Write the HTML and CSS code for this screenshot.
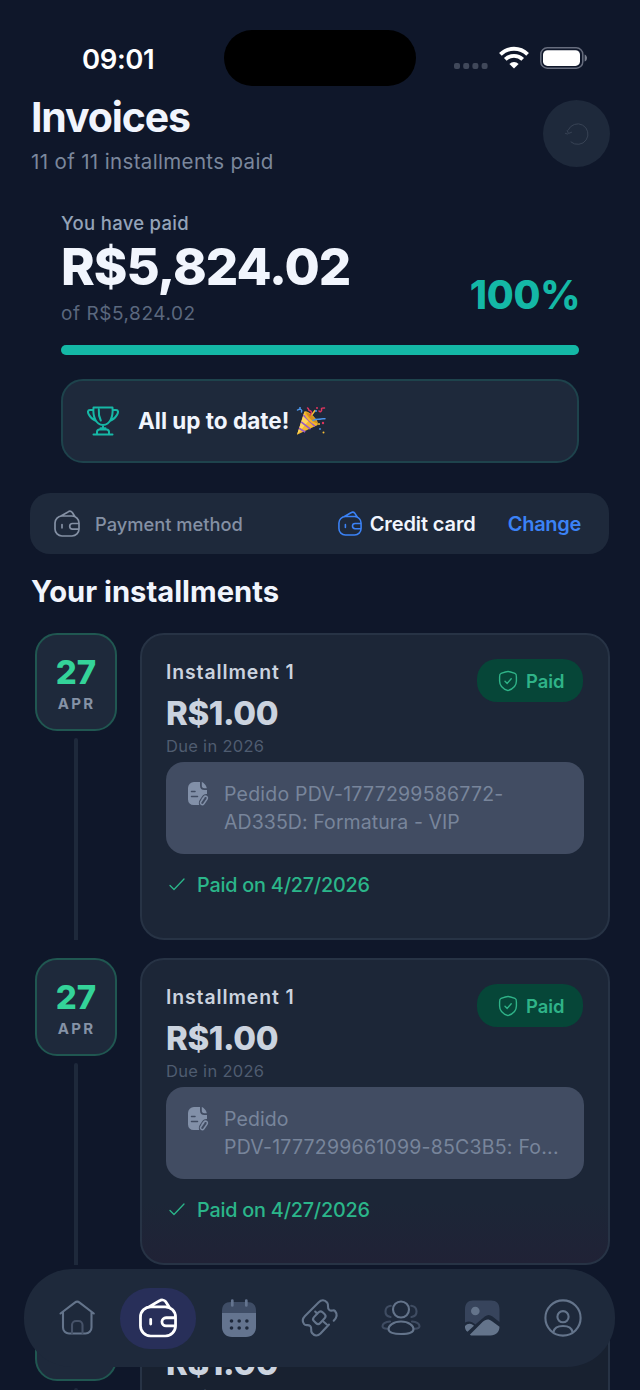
FILE: index.html
```
<!DOCTYPE html>
<html lang="en">
<head>
<meta charset="utf-8">
<title>Invoices</title>
<link rel="stylesheet" href="styles.css">
</head>
<body>
<svg class="defs" width="0" height="0" aria-hidden="true">
  <symbol id="wallet" viewBox="0 0 26 27" fill="none" stroke="currentColor" stroke-linecap="round" stroke-linejoin="round">
    <path d="M8 6h10a7 7 0 0 1 7 7v6a7 7 0 0 1-7 7H8a7 7 0 0 1-7-7v-6a7 7 0 0 1 7-7ZM6.500 6.200 14 1.900a3.300 3.300 0 0 1 4.300.6L21 6.700M25 13.500h-6.500a2.800 2.800 0 0 0 0 5.600H25M8 14.600v3.200"/>
  </symbol>
  <symbol id="shield" viewBox="0 0 20 22" fill="none" stroke="currentColor" stroke-linecap="round" stroke-linejoin="round">
    <path d="M10 1.500c-2.500 0-5 1.200-7.300 2.100C1.600 4 1.600 5 1.600 7v4c0 5.600 4.400 8.300 8.400 9.600 4-1.300 8.400-4 8.400-9.600V7c0-2 0-3-1.100-3.400C15 2.700 12.500 1.500 10 1.500ZM7 11.200l2.200 2.200 4-4.600"/>
  </symbol>
  <symbol id="note" viewBox="0 0 22 25">
    <path fill="currentColor" d="M7 1h6v3.500c0 3 1.500 4.500 4.500 4.500H20v4c-1.500-.3-3.500.4-4.800 2.200l-2.600 4.100c-.9 1.500-.9 3.300-.4 4.700H6.500A5.500 5.500 0 0 1 1 18.500V7a6 6 0 0 1 6-6Zm7.800.1c1.800.5 4.500 3.400 5 6.100h-2.300c-2 0-2.700-.8-2.700-2.700V1.100Z"/>
    <path d="M4.500 10.500H8M4.500 15.500h6" stroke="#414c62" stroke-width="1.500" stroke-linecap="round"/>
    <path d="M15 18.500l1.700-2.300c1.900-2.300 4.700-.4 3.200 2.200l-3 4.300c-1.500 2-4.300.4-3-2l2.800-3.900" fill="none" stroke="currentColor" stroke-width="1.500" stroke-linecap="round"/>
  </symbol>
  <symbol id="check" viewBox="0 0 16 13" fill="none" stroke="currentColor" stroke-width="1.300" stroke-linecap="round" stroke-linejoin="round">
    <path d="M1 7.500l4 4L15 1"/>
  </symbol>
</svg>

<main class="screen">
  <div class="status">
    <span class="clock">09:01</span>
    <span class="island"></span>
    <span class="signals">
      <svg class="dots" width="34" height="6" viewBox="0 0 34 6"><g fill="#40485a"><rect width="6" height="6" rx="2"/><rect x="9.200" width="6" height="6" rx="2"/><rect x="18.400" width="6" height="6" rx="2"/><rect x="27.600" width="6" height="6" rx="2"/></g></svg>
      <svg class="wifi" width="30" height="22" viewBox="0 0 30 22"><g fill="none" stroke="#fff" stroke-width="3.800"><path d="M1.400 7.300a19.400 19.400 0 0 1 27.200 0"/><path d="M6.300 12.400a12.500 12.500 0 0 1 17.400 0"/></g><path fill="#fff" d="M10.400 16.900a6.600 6.600 0 0 1 9.200 0L15 21.600Z"/></svg>
      <svg class="battery" width="48" height="22" viewBox="0 0 48 22"><rect x=".8" y=".8" width="42" height="20.400" rx="6.500" fill="none" stroke="#676d7e" stroke-width="1.500"/><rect x="3" y="3.300" width="37" height="15.600" rx="4.500" fill="#fff"/><path fill="#777d8c" d="M44.600 7.500c3.200 1 3.200 6 0 7Z"/></svg>
    </span>
  </div>

  <header class="top">
    <div>
      <h1 class="title">Invoices</h1>
      <p class="subtitle">11 of 11 installments paid</p>
    </div>
    <button class="refresh" aria-label="Refresh">
      <svg width="26" height="26" viewBox="0 0 26 26" fill="none" stroke="#384355" stroke-linecap="round"><path d="M4.200 9A10.300 10.300 0 1 1 7 21M1.500 12.400l2 .6M3.200 9.500l1.300 3 3-1.200"/></svg>
    </button>
  </header>

  <section class="summary">
    <div class="totals">
      <div>
        <p class="label">You have paid</p>
        <p class="amount">R$5,824.02</p>
        <p class="of">of R$5,824.02</p>
      </div>
      <p class="percent">100%</p>
    </div>
    <div class="progress"><div class="progress-fill"></div></div>
    <div class="alert">
      <svg width="32" height="30" viewBox="0 0 32 30" fill="none" stroke="#16b8a6" stroke-width="2" stroke-linecap="round" stroke-linejoin="round"><path d="M6.500 1.500h19c.8 8.500-2 17.500-9.500 17.500S5.700 10 6.500 1.500ZM6.500 4H3C.5 4 .5 6 1.800 8.500c1.500 3 4.500 5.200 7 6.200M25.500 4H29c2.500 0 2.500 2 1.200 4.500-1.500 3-4.500 5.200-7 6.200M11.800 3.500c-.3 4 .5 8 2 11M16 19v4M13.500 22.300h5M10 28v-2c0-1.500.8-2.500 2.500-2.500h7c1.700 0 2.500 1 2.500 2.500v2M6.500 28.500h19"/></svg>
      <span class="alert-text">All up to date!</span>
      <svg class="party" width="30" height="30" viewBox="0 0 30 30">
        <path fill="#f5b82e" d="M1 28.700 8.400 5.700c3.900 1.500 11.300 8.400 13.300 13.200Z"/>
        <path fill="#ffd75a" d="M1 28.700 8.400 5.700c2 2 3.600 5.800 3.600 9.800Z"/>
        <path fill="none" stroke="#985bc4" stroke-width="1.600" d="M7.300 9.200 19 20.400M5.100 15.800l9.400 7.400M3 22.200l6.200 3.800"/>
        <ellipse cx="15" cy="12.200" rx="9.300" ry="3.200" transform="rotate(45 15 12.200)" fill="#f2b52c"/>
        <ellipse cx="15.600" cy="11.700" rx="7.500" ry="1.800" transform="rotate(45 15.600 11.700)" fill="#d48f1e"/>
        <g fill="none" stroke-width="1.500" stroke-linecap="round"><path stroke="#e0355f" d="M14 9c3-3 1-4-.5-4.500s-.3-2-2-2.500M23 5c2 2 3-1 2.500-2s1.500-1 3-1"/><path stroke="#4b94e8" d="M17 14.500c3-2 6-1 8-1.500s2.500 0 4-.3M1.500 4c3-2 5 0 4 2"/><path stroke="#f7bd35" d="M16 8.500l3-4"/></g>
        <g><circle cx="4" cy="2" r="1" fill="#4b94e8"/><circle cx="20" cy="5" r="1" fill="#4b94e8"/><circle cx="27" cy="17" r="1.200" fill="#e0355f"/><circle cx="23" cy="18" r="1" fill="#f7bd35"/><circle cx="27.500" cy="26.500" r="1" fill="#f7bd35"/><circle cx="24" cy="23" r=".9" fill="#4b94e8"/><circle cx="21" cy="2" r="1" fill="#e0355f"/></g>
      </svg>
    </div>
  </section>

  <section class="payment">
    <svg class="pay-icon" width="26" height="27"><use href="#wallet"/></svg>
    <span class="pay-label">Payment method</span>
    <svg class="card-icon" width="24" height="25"><use href="#wallet"/></svg>
    <span class="pay-value">Credit card</span>
    <span class="change">Change</span>
  </section>

  <h2 class="heading">Your installments</h2>

  <section class="list">
    <article class="row">
      <div class="rail">
        <div class="date"><span class="day">27</span><span class="month">APR</span></div>
        <div class="thread"></div>
      </div>
      <div class="card">
        <div class="card-head">
          <div>
            <h3 class="name">Installment 1</h3>
            <p class="price">R$1.00</p>
            <p class="due">Due in 2026</p>
          </div>
          <span class="badge"><svg width="20" height="22"><use href="#shield"/></svg><span class="badge-text">Paid</span></span>
        </div>
        <div class="note"><svg class="note-icon" width="22" height="25"><use href="#note"/></svg><p class="note-text">Pedido PDV-1777299586772-<br><span class="tight">AD335D: Formatura - VIP</span></p></div>
        <p class="paid"><svg width="16" height="13"><use href="#check"/></svg><span class="paid-text">Paid on 4/27/2026</span></p>
      </div>
    </article>
    <article class="row">
      <div class="rail">
        <div class="date"><span class="day">27</span><span class="month">APR</span></div>
        <div class="thread"></div>
      </div>
      <div class="card tinted">
        <div class="card-head">
          <div>
            <h3 class="name">Installment 1</h3>
            <p class="price">R$1.00</p>
            <p class="due">Due in 2026</p>
          </div>
          <span class="badge"><svg width="20" height="22"><use href="#shield"/></svg><span class="badge-text">Paid</span></span>
        </div>
        <div class="note"><svg class="note-icon" width="22" height="25"><use href="#note"/></svg><p class="note-text"><span class="tight">Pedido</span><br>PDV-1777299661099-85C3B5: Fo...</p></div>
        <p class="paid"><svg width="16" height="13"><use href="#check"/></svg><span class="paid-text">Paid on 4/27/2026</span></p>
      </div>
    </article>
    <article class="row">
      <div class="rail">
        <div class="date"><span class="day">27</span><span class="month">APR</span></div>
        <div class="thread"></div>
      </div>
      <div class="card dim">
        <div class="card-head">
          <div>
            <h3 class="name">Installment 1</h3>
            <p class="price">R$1.00</p>
            <p class="due">Due in 2026</p>
          </div>
        </div>
      </div>
    </article>
  </section>

  <nav class="tabs">
    <span class="tab"><svg width="38" height="38" viewBox="0 0 38 38" fill="none" stroke="#64748b" stroke-width="2.100" stroke-linecap="round" stroke-linejoin="round"><path d="M2.500 14.500 16.800 3.600a4 4 0 0 1 4.800 0L35.800 14.500M5 13v15.500a6 6 0 0 0 6 6h16.500a6 6 0 0 0 6-6V13"/><path stroke="#465268" d="M14 34V26a4 4 0 0 1 4-4h2.500a4 4 0 0 1 4 4v8"/></svg></span>
    <span class="tab active"><svg width="38" height="39.500"><use href="#wallet"/></svg></span>
    <span class="tab"><svg width="36" height="40" viewBox="0 0 36 40"><path fill="#3f4d66" d="M1 15V13C1 7 4 4 10 4h16c6 0 9 3 9 9v2Z"/><path fill="#64748f" d="M1 15h34v14c0 6-4 10-10 10H11C5 39 1 35 1 29Z"/><path stroke="#64748f" stroke-width="2.700" stroke-linecap="round" d="M11.300 2.500v5M25.300 2.500v5"/><g fill="#1e293b"><circle cx="10.500" cy="23" r="1.800"/><circle cx="18.200" cy="23" r="1.800"/><circle cx="25.900" cy="23" r="1.800"/><circle cx="10.500" cy="30" r="1.800"/><circle cx="18.200" cy="30" r="1.800"/><circle cx="25.900" cy="30" r="1.800"/></g></svg></span>
    <span class="tab"><svg width="38" height="38" viewBox="0 0 38 38" fill="none" stroke="#64748b" stroke-width="2.100" stroke-linecap="round" stroke-linejoin="round"><path d="M32.700 21.700C36 18.500 36.800 15.500 34 12c-1.500-1.700-3.500.8-5.700-1-2.800-2.200-.1-4.700-2-7.200-2.800-3.200-5.800-3.300-8.800-.3L4 17c-3.200 3.300-2.800 5.500-1 8 1.800 2.400 4 0 6.200 2 2.300 2.300-.2 4.500 1.800 7 2.500 3 5.500 3.500 8.500.5l8.500-9M14.200 12.500l1.800 2M22 22.200l3.500 3"/><rect x="-6.200" y="-4.300" width="12.400" height="8.600" rx="3" transform="translate(18.300 18.700) rotate(-47)"/></svg></span>
    <span class="tab"><svg width="40" height="38" viewBox="0 0 40 38" fill="none" stroke-width="2.100" stroke-linecap="round"><g stroke="#3f4c62"><path d="M9.500 18c-7-1-6.500-10.500.3-11.200M30.500 18c7-1 6.500-10.500-.3-11.200M9 22.500c-5 .3-7.500 2.700-7.500 4.700 0 1.500 2 2.300 4.500 2.600M31 22.500c5 .3 7.500 2.700 7.500 4.700 0 1.500-2 2.300-4.500 2.600"/></g><g stroke="#64748b"><circle cx="20" cy="10.500" r="8"/><path d="M20 22.500c8 0 12.500 4.500 12.500 7.500 0 3.500-5.500 5-12.500 5S7.500 33.500 7.500 30c0-3 4.500-7.500 12.500-7.500Z"/></g></svg></span>
    <span class="tab"><svg width="36" height="36" viewBox="0 0 36 36"><path fill="#37445c" d="M9 .5h18c5.500 0 8.500 3 8.500 9V22l-7-5.500c-2.800-2-5-2-7.700 0l-9.500 8C8 21.500 5 20.500 1 22.500v-13c0-6 3-9 8-9Z"/><circle cx="11.300" cy="11" r="4.300" fill="#64748b"/><path fill="#64748b" d="M6 34.500 18.500 22c3-2.700 6-3.500 9.500-.7l7.500 5.500c0 5-3.500 8.700-9 8.700H8c-1 0-2-.3-2-1ZM1 26c2.500-2.700 5.300-3 8-1l1 .8-6.500 6C1.500 30.500.8 28.500 1 26Z"/></svg></span>
    <span class="tab"><svg width="38" height="38" viewBox="0 0 38 38" fill="none" stroke="#64748b" stroke-width="2.100"><circle cx="19" cy="19" r="17.600"/><circle cx="19" cy="17.700" r="5.600"/><path d="M9.500 33c.7-4.500 4.500-6 9.500-6s8.800 1.500 9.500 6"/></svg></span>
  </nav>
</main>
</body>
</html>
```
FILE: styles.css
```
* { box-sizing: border-box; margin: 0; padding: 0; }

body {
  width: 640px;
  height: 1390px;
  overflow: hidden;
  background: #0f172a;
  color: #f1f5fd;
  font-family: Inter, sans-serif;
}

svg { display: block; flex: none; overflow: visible; }
.defs { position: absolute; }

.screen {
  position: relative;
  height: 1390px;
  overflow: hidden;
  background: #0f172a;
}

/* Status bar */
.status {
  display: grid;
  grid-template-columns: 224px 192px 224px;
  height: 96px;
  padding-top: 30px;
}
.clock {
  padding-left: 82px;
  font-size: 27.500px;
  font-weight: 600;
  line-height: 58px;
  letter-spacing: -.4px;
  color: #fff;
}
.island { height: 56px; border-radius: 28px; background: #000; }
.signals { display: flex; padding: 17px 0 0 38px; }
.dots { margin-top: 16px; }
.wifi { margin-left: 11px; }
.battery { margin-left: 11px; }

/* Header */
.top {
  display: flex;
  justify-content: space-between;
  height: 116px;
  padding: 0 31px;
}
.title { font-size: 41px; font-weight: 700; line-height: 43px; letter-spacing: -1.150px; }
.subtitle { margin-top: 9px; font-size: 20.500px; line-height: 28px; letter-spacing: .35px; color: #7b879c; }
.refresh {
  display: grid;
  place-items: center;
  width: 67px;
  height: 67px;
  margin: 4px -1px 0 0;
  border: 0;
  border-radius: 50%;
  background: #1e293b;
}

/* Summary */
.summary { height: 281px; padding: 0 61px; }
.totals { display: flex; justify-content: space-between; align-items: flex-end; height: 116px; }
.label { font-size: 18.500px; font-weight: 500; line-height: 22px; letter-spacing: .3px; color: #94a3b8; }
.amount { font-size: 51px; font-weight: 800; line-height: 66px; letter-spacing: -1px; }
.of { height: 28px; font-size: 19px; line-height: 27px; letter-spacing: .55px; color: #5b687e; }
.percent { height: 58px; margin-right: -1px; font-size: 39px; font-weight: 800; line-height: 50px; letter-spacing: -.3px; color: #14b8a6; }
.progress { height: 10px; margin-top: 17px; border-radius: 5px; background: #1e293b; }
.progress-fill { height: 10px; border-radius: 5px; background: #14b8a6; }
.alert {
  display: flex;
  align-items: center;
  height: 84px;
  margin-top: 24px;
  padding-left: 24px;
  border: 2px solid #1e434c;
  border-radius: 22px;
  background: #1e293b;
}
.alert-text { margin: -2px 0 0 19px; font-size: 22.500px; font-weight: 700; }
.party { margin-left: 7px; }

/* Payment method */
.payment {
  display: flex;
  align-items: center;
  height: 61px;
  margin: 0 31px 0 30px;
  padding: 0 28px 0 24px;
  border-radius: 20px;
  background: #1e293b;
}
.pay-icon { color: #8490a4; stroke-width: 1.700; }
.pay-label { margin-left: 15px; font-size: 18.300px; font-weight: 500; color: #8490a4; }
.card-icon { margin-left: auto; color: #3b82f6; stroke-width: 1.700; }
.pay-value { margin-left: 8px; font-size: 20px; font-weight: 600; letter-spacing: -.1px; }
.change { margin-left: 32px; font-size: 20px; font-weight: 600; letter-spacing: -.3px; color: #3b82f6; }

.heading {
  height: 79px;
  padding: 19px 0 0 31px;
  font-size: 29.200px;
  font-weight: 700;
  line-height: 37px;
  letter-spacing: 0;
}

/* Installments */
.list { display: flex; flex-direction: column; gap: 18px; padding: 0 30px 0 35px; }
.row { display: flex; justify-content: space-between; height: 307px; }
.rail { display: flex; flex-direction: column; align-items: center; width: 82px; }
.date {
  display: flex;
  flex-direction: column;
  align-items: center;
  width: 82px;
  height: 98px;
  padding-top: 18px;
  border: 2px solid #205751;
  border-radius: 22px;
  background: #1e293b;
}
.day { font-size: 33px; font-weight: 800; line-height: 38px; color: #34d399; }
.month { padding-left: 1px; font-size: 15px; font-weight: 700; line-height: 26px; letter-spacing: 2.300px; color: #8592a6; }
.thread { width: 4px; flex: 1; margin-top: 7px; border-radius: 2px 2px 0 0; background: #1e293b; }
.card {
  width: 470px;
  height: 307px;
  padding: 24px 24px 0;
  border: 2px solid #273345;
  border-radius: 24px;
  background: #1c2637;
}
.tinted { background: linear-gradient(#1c2637 80%, #202236); }
.dim { background: #182130; }
.card-head { display: flex; justify-content: space-between; height: 103px; }
.name { font-size: 19.400px; font-weight: 600; line-height: 27px; letter-spacing: .9px; color: #cbd3df; }
.price { font-size: 33px; font-weight: 800; line-height: 54px; letter-spacing: -.4px; color: #cbd3df; }
.due { margin-top: -4px; font-size: 16.500px; line-height: 20px; letter-spacing: .3px; color: #4f5c70; }
.badge {
  display: flex;
  align-items: center;
  gap: 8px;
  width: 106px;
  height: 43px;
  margin-right: 1px;
  padding-left: 21px;
  border-radius: 20px;
  background: #064638;
  color: #2fb388;
  stroke-width: 1.400;
}
.badge-text { font-size: 18.400px; font-weight: 600; }
.note { display: flex; height: 92px; padding: 18px 0 0 21px; border-radius: 18px; background: #414c62; }
.note-icon { margin-top: 1px; color: #8290a8; }
.note-text { margin-left: 15px; font-size: 19.500px; line-height: 28px; letter-spacing: .22px; color: #78859b; white-space: nowrap; }
.tight { letter-spacing: .08px; }
.paid { display: flex; align-items: center; height: 61px; padding-left: 3px; color: #2bb68a; }
.paid-text { margin-left: 12px; font-size: 19.800px; font-weight: 500; letter-spacing: -.2px; }

/* The tab bar floats over the list. */
.tabs {
  position: absolute;
  left: 24px;
  top: 1269px;
  display: grid;
  grid-template-columns: repeat(7, 81px);
  align-items: center;
  width: 591px;
  height: 98px;
  padding-left: 12px;
  border-radius: 48px;
  background: #1e293b;
}
.tab { display: grid; place-items: center; height: 61px; }
.active { width: 76px; margin-left: 3px; border-radius: 30px; background: #282f59; color: #fff; stroke-width: 1.900; }
```
